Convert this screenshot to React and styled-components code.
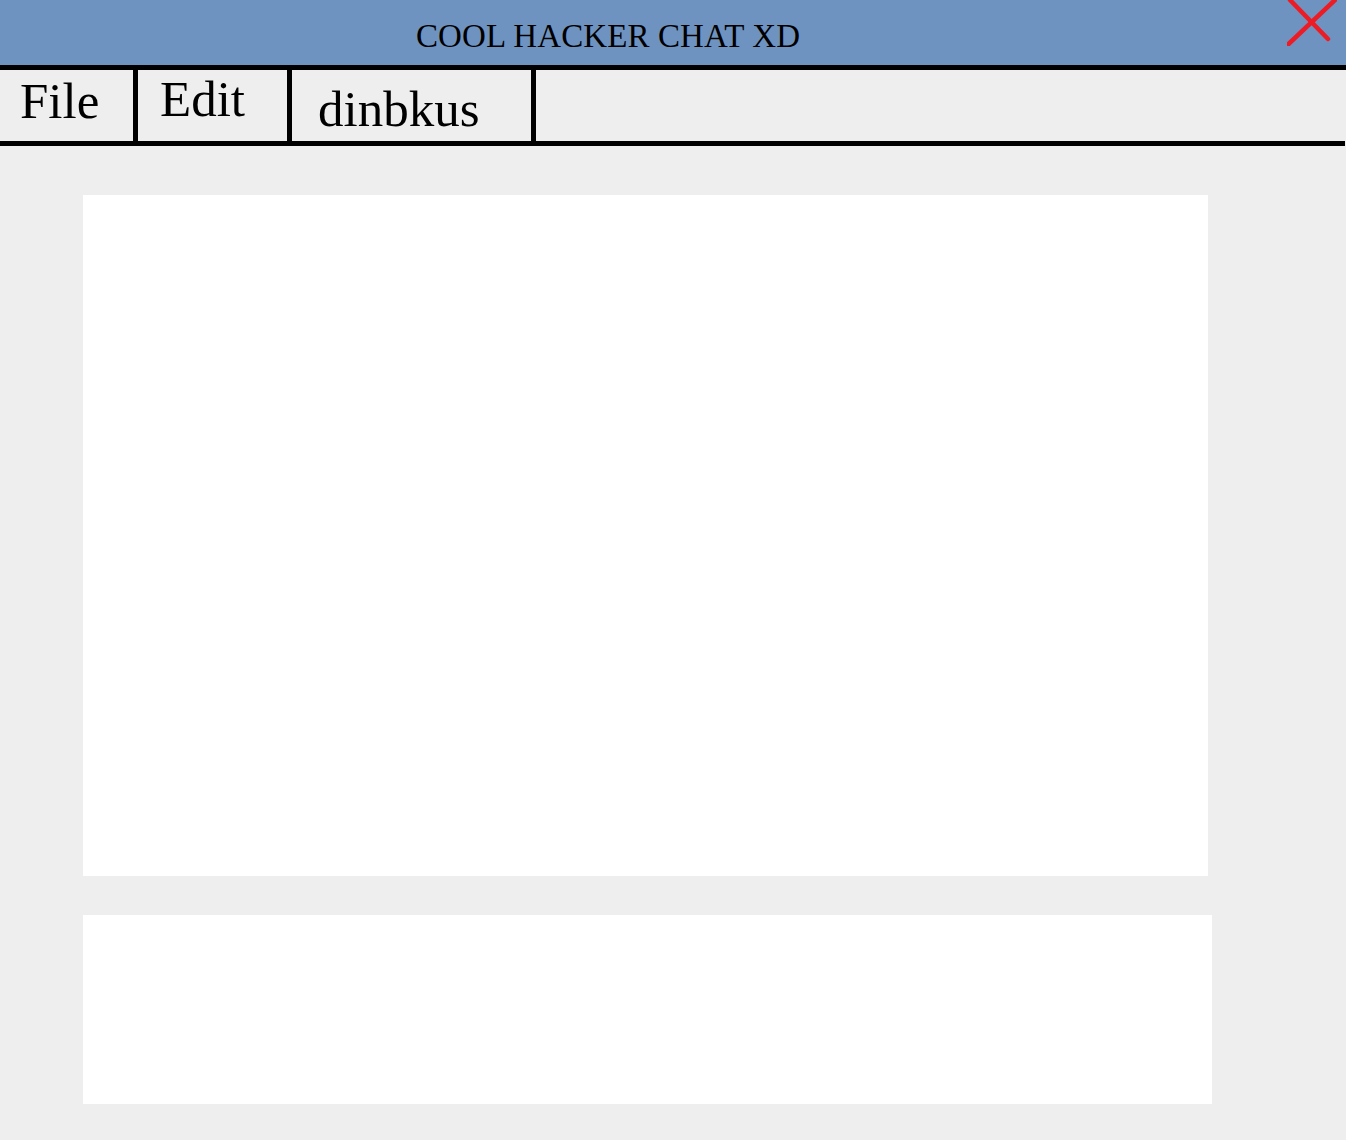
import React from "react";
import styled, { createGlobalStyle } from "styled-components";

const Global = createGlobalStyle`
  html, body {
    margin: 0;
    padding: 0;
    background: #eeeeee;
  }
  body {
    font-family: "Liberation Serif", "Times New Roman", serif;
    min-height: 1140px;
  }
`;

const Window = styled.div`
  display: flex;
  flex-direction: column;
  min-height: 1140px;
  background: #eeeeee;
`;

const TitleBar = styled.header`
  display: flex;
  height: 65px;
  background: #6f93c0;
  border-bottom: 5px solid #000;
`;

const Title = styled.h1`
  flex: 1;
  margin: 0;
  padding-top: 20px;
  text-align: center;
  font-family: "Liberation Serif", serif;
  font-weight: normal;
  font-size: 33px;
  letter-spacing: 0.1px;
  line-height: 32px;
  color: #000;
`;

const CloseArea = styled.div`
  width: 130px;
  display: flex;
  justify-content: flex-end;
  align-items: flex-start;
  padding-right: 9px;
  box-sizing: border-box;
`;

const CloseButton = styled.button`
  border: 0;
  padding: 0;
  margin: 0;
  background: transparent;
  width: 50px;
  height: 46px;
  cursor: pointer;
  display: block;
  svg { display: block; }
`;

const MenuBar = styled.nav`
  display: flex;
  height: 71px;
  width: 1345px;
  border-bottom: 5px solid #000;
  background: #eeeeee;
`;

const MenuItem = styled.div`
  box-sizing: content-box;
  width: ${(p) => p.$w - p.$pl}px;
  padding-left: ${(p) => p.$pl}px;
  padding-top: ${(p) => p.$pt}px;
  border-right: 5px solid #000;
  font-family: "Liberation Serif", serif;
  font-size: 51px;
  line-height: 50px;
  color: #000;
  white-space: nowrap;
`;

const Content = styled.main`
  display: flex;
  flex-direction: column;
  gap: 39px;
  padding: 49px 0 36px 83px;
`;

const Panel = styled.div`
  background: #ffffff;
  width: ${(p) => p.$w}px;
  height: ${(p) => p.$h}px;
`;

export default function App() {
  return (
    <>
      <Global />
      <Window>
        <TitleBar>
          <Title>COOL HACKER CHAT XD</Title>
          <CloseArea>
            <CloseButton aria-label="close">
              <svg width="50" height="46" viewBox="0 0 50 46">
                <line x1="3" y1="0" x2="41" y2="39" stroke="#ed1c24" strokeWidth="4.5" strokeLinecap="round" />
                <line x1="1.5" y1="44" x2="49" y2="-1" stroke="#ed1c24" strokeWidth="4.5" strokeLinecap="round" />
              </svg>
            </CloseButton>
          </CloseArea>
        </TitleBar>
        <MenuBar>
          <MenuItem $w={133} $pl={20} $pt={6}>File</MenuItem>
          <MenuItem $w={149} $pl={22} $pt={4}>Edit</MenuItem>
          <MenuItem $w={239} $pl={26} $pt={14}>dinbkus</MenuItem>
        </MenuBar>
        <Content>
          <Panel $w={1125} $h={681} />
          <Panel $w={1129} $h={189} />
        </Content>
      </Window>
    </>
  );
}
